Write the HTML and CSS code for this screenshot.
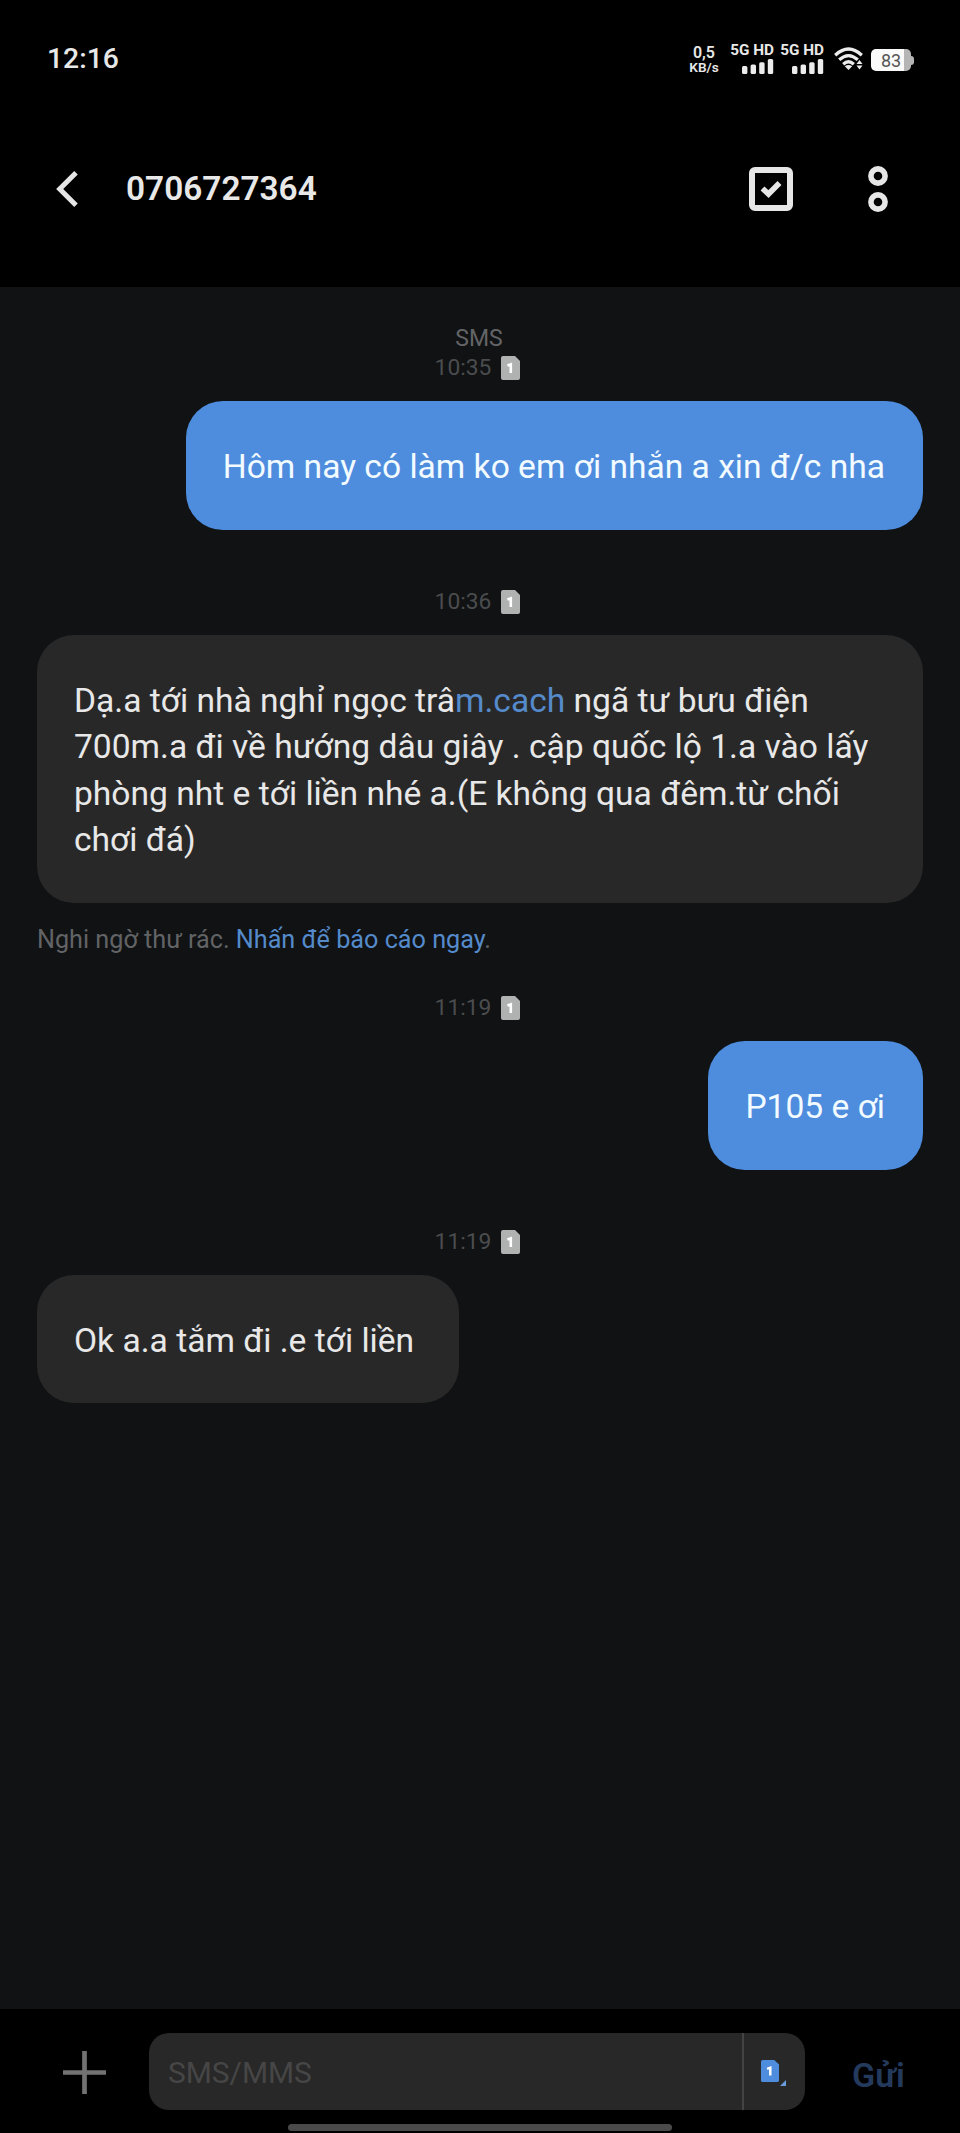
FILE: index.html
```html
<!DOCTYPE html>
<html lang="vi">
<head>
<meta charset="utf-8">
<title>0706727364</title>
<link rel="stylesheet" href="styles.css">
</head>
<body>
<svg width="0" height="0" class="defs" aria-hidden="true">
  <symbol id="sim" viewBox="0 0 19 24" preserveAspectRatio="none">
    <path d="M2 0H14L19 5V22a2 2 0 0 1-2 2H2a2 2 0 0 1-2-2V2a2 2 0 0 1 2-2z" fill="currentColor"/>
    <path d="M6.4 9.6L9.8 8.4V17" fill="none" stroke="#fff" stroke-width="2.6"/>
  </symbol>
  <symbol id="bars" viewBox="0 0 32 15">
    <g fill="#ececec"><rect x="0" y="7" width="5.4" height="8" rx="1.5"/><rect x="8.6" y="5.5" width="5.4" height="9.5" rx="1.5"/><rect x="17.2" y="3.2" width="5.4" height="11.8" rx="1.5"/><rect x="25.8" y="0" width="5.4" height="15" rx="1.5"/></g>
  </symbol>
</svg>
<div class="phone">
  <header class="status">
    <span class="clock">12:16</span>
    <div class="indicators">
      <div class="speed"><span class="rate">0,5</span><span class="unit">KB/s</span></div>
      <div class="signal"><span>5G HD</span><svg class="bars"><use href="#bars"/></svg></div>
      <div class="signal second"><span>5G HD</span><svg class="bars"><use href="#bars"/></svg></div>
      <svg class="wifi" viewBox="0 0 30 24">
        <g fill="none" stroke="#ececec" stroke-width="3.3"><path d="M1.2 8.2Q14.5-4 27.8 8.2"/><path d="M5.2 12.8Q14.5 4.4 23.8 12.8"/><path d="M9.2 17.2Q14.5 12.4 19.8 17.2"/></g>
        <path d="M10.8 19.2Q14.5 16.6 18.2 19.2L14.5 23z" fill="#ececec"/>
        <path d="M22.5 17L25.5 13L28.5 17zM22.5 18.6H28.5L25.5 22.6z" fill="#ececec"/>
      </svg>
      <div class="battery"><span class="level">83</span><span class="cap"></span></div>
    </div>
  </header>
  <nav class="topbar">
    <svg class="back" viewBox="0 0 22 36"><path d="M20 1.8L3.7 18L20 34.2" fill="none" stroke="#e6e6e6" stroke-width="5"/></svg>
    <h1 class="title">0706727364</h1>
    <svg class="select" viewBox="0 0 44 44"><rect x="3" y="3" width="38" height="38" rx="3" fill="none" stroke="#e6e6e6" stroke-width="6"/><path d="M13.5 21.5L19.5 27L30.5 16" fill="none" stroke="#e6e6e6" stroke-width="5.6"/></svg>
    <svg class="more" viewBox="0 0 20 46"><g fill="none" stroke="#e6e6e6" stroke-width="5.6"><circle cx="10" cy="10" r="7.1"/><circle cx="10" cy="36" r="7.1"/></g></svg>
  </nav>
  <main class="chat">
    <div class="kind">SMS</div>
    <div class="time"><span>10:35</span><svg class="sim"><use href="#sim"/></svg></div>
    <div class="bubble sent">Hôm nay có làm ko em ơi nhắn a xin đ/c nha</div>
    <div class="time later"><span>10:36</span><svg class="sim"><use href="#sim"/></svg></div>
    <div class="bubble received wide">Dạ.a tới nhà nghỉ ngọc trâ<a class="link">m.cach</a> ngã tư bưu điện<br>700m.a đi về hướng dâu giây . cập quốc lộ 1.a vào lấy<br>phòng nht e tới liền nhé a.(E không qua đêm.từ chối<br>chơi đá)</div>
    <div class="spam">Nghi ngờ thư rác. <a class="link">Nhấn để báo cáo ngay</a>.</div>
    <div class="time after-spam"><span>11:19</span><svg class="sim"><use href="#sim"/></svg></div>
    <div class="bubble sent">P105 e ơi</div>
    <div class="time later"><span>11:19</span><svg class="sim"><use href="#sim"/></svg></div>
    <div class="bubble received">Ok a.a tắm đi .e tới liền</div>
  </main>
  <footer class="composer">
    <svg class="plus" viewBox="0 0 42 42"><path d="M0 21H42M21 0V42" stroke="#727272" stroke-width="4.6"/></svg>
    <div class="field">
      <span class="placeholder">SMS/MMS</span>
      <div class="sim-picker"><svg class="sim"><use href="#sim"/></svg><svg class="corner" viewBox="0 0 6 6"><path d="M6 0V6H0z" fill="#6a9bdc"/></svg></div>
    </div>
    <span class="send">Gửi</span>
    <div class="homebar"></div>
  </footer>
</div>
</body>
</html>
```
FILE: styles.css
```css
* { box-sizing: border-box; }
body { margin: 0; background: #000; font-family: Roboto, "Noto Sans", sans-serif; color: #e8e8e8; }
svg { display: block; flex: none; }
.defs { position: absolute; }
.phone { width: 960px; height: 2133px; display: flex; flex-direction: column; overflow: hidden; }

.status { height: 120px; padding: 0 46px 0 47px; display: flex; align-items: flex-start; justify-content: space-between; }
.clock { font-size: 28.3px; font-weight: 500; line-height: 34px; margin-top: 42px; }
.indicators { display: flex; align-items: flex-start; padding-top: 43px; white-space: nowrap; }
.speed { width: 30px; display: flex; flex-direction: column; align-items: center; font-weight: 600; margin: 2px 12px 0 0; }
.rate { font-size: 16px; line-height: 15px; }
.unit { font-size: 13.6px; line-height: 14px; }
.signal { width: 43px; display: flex; flex-direction: column; align-items: flex-end; font-size: 15.3px; font-weight: 700; line-height: 14px; }
.signal.second { margin-left: 7px; }
.bars { width: 32px; height: 15px; margin-top: 2px; }
.wifi { width: 30px; height: 24px; margin: 4px 0 0 10px; }
.battery { display: flex; align-items: center; margin: 6px 0 0 7px; }
.level { width: 40px; height: 22px; border-radius: 5px; background: linear-gradient(90deg, #fafafa 83%, #b5b5b5 83%); color: #555; font-size: 18px; line-height: 23px; text-align: center; }
.cap { width: 3px; height: 9px; border-radius: 0 3px 3px 0; background: #b5b5b5; }

.topbar { height: 167px; padding: 0 72px 0 56px; display: flex; align-items: flex-start; }
.back { width: 22px; height: 36px; margin-top: 51px; }
.title { margin: 48px 0 0 48px; flex: 1; font-size: 33.4px; line-height: 42px; font-weight: 600; }
.select { width: 44px; height: 44px; margin-top: 47px; }
.more { width: 20px; height: 46px; margin: 46px 0 0 75px; }

.chat { flex: none; height: 1722px; background: #101214; padding: 37px 37px 0; display: flex; flex-direction: column; }
.kind { padding-right: 2px; text-align: center; font-size: 23px; line-height: 30px; color: #636466; }
.time { display: flex; justify-content: center; align-items: center; gap: 10px; height: 30px; padding-right: 5px; margin-bottom: 18px; font-size: 22.8px; line-height: 30px; color: #4b4c4e; }
.kind + .time { margin-top: -1px; }
.time .sim { width: 19px; height: 24px; color: #b0b1b1; }
.time.later { margin-top: 57px; }
.time.after-spam { margin-top: 37px; }
.bubble { padding: 43px 38px 39px 37px; border-radius: 37px; font-size: 33.6px; line-height: 46.6px; white-space: nowrap; }
.sent { align-self: flex-end; background: #4e8cde; color: #f2fbff; }
.received { align-self: flex-start; padding-right: 45px; background: #282828; }
.received.wide { align-self: stretch; }
.link { color: #558acb; }
.spam { margin-top: 21px; font-size: 25.2px; line-height: 32px; color: #626365; white-space: nowrap; }

.composer { flex: 1; position: relative; display: flex; align-items: flex-start; padding: 24px 0 0 63px; background: #000; }
.plus { width: 43px; height: 43px; margin-top: 18px; }
.field { width: 656px; height: 77px; margin-left: 43px; border-radius: 20px; background: #282828; display: flex; align-items: stretch; overflow: hidden; }
.placeholder { flex: 1; padding-left: 19px; font-size: 29.9px; line-height: 79px; color: #464646; }
.sim-picker { width: 63px; border-left: 2px solid #444; padding: 27px 0 0 17px; display: flex; }
.sim-picker .sim { width: 18px; height: 22px; color: #4e8cde; }
.corner { width: 6px; height: 6px; margin: 20px 0 0 1px; }
.send { margin: 20px 0 0 47px; font-size: 34px; line-height: 44px; font-weight: 600; color: #243a5d; }
.homebar { position: absolute; left: 288px; top: 115px; width: 384px; height: 7px; border-radius: 4px; background: #4a4a4a; }
```
